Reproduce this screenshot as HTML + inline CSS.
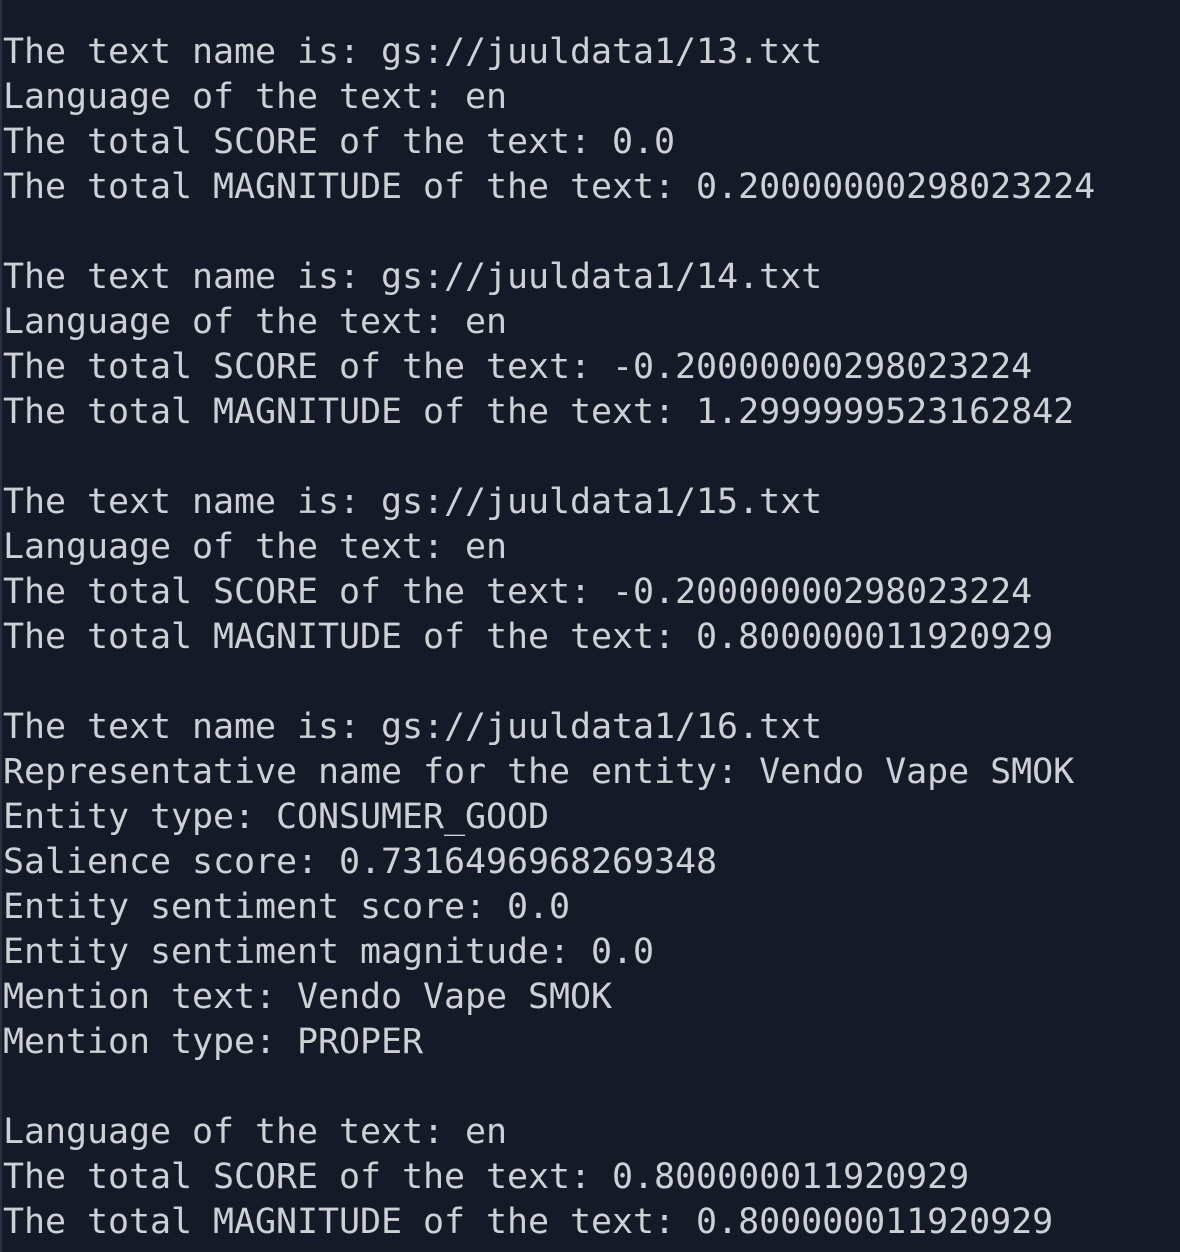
<!DOCTYPE html>
<html><head><style>
html,body{margin:0;padding:0;background:#141a28;width:1180px;height:1252px;overflow:hidden}
body{border-left:2px solid #2a3040;box-sizing:border-box}
pre{margin:0;position:absolute;left:3px;top:30px;font-family:"DejaVu Sans Mono","Liberation Mono",monospace;font-size:35px;line-height:45px;color:#cdd0d4;letter-spacing:-0.07px}
</style></head><body><pre>The text name is: gs://juuldata1/13.txt
Language of the text: en
The total SCORE of the text: 0.0
The total MAGNITUDE of the text: 0.20000000298023224

The text name is: gs://juuldata1/14.txt
Language of the text: en
The total SCORE of the text: -0.20000000298023224
The total MAGNITUDE of the text: 1.2999999523162842

The text name is: gs://juuldata1/15.txt
Language of the text: en
The total SCORE of the text: -0.20000000298023224
The total MAGNITUDE of the text: 0.800000011920929

The text name is: gs://juuldata1/16.txt
Representative name for the entity: Vendo Vape SMOK
Entity type: CONSUMER_GOOD
Salience score: 0.7316496968269348
Entity sentiment score: 0.0
Entity sentiment magnitude: 0.0
Mention text: Vendo Vape SMOK
Mention type: PROPER

Language of the text: en
The total SCORE of the text: 0.800000011920929
The total MAGNITUDE of the text: 0.800000011920929</pre></body></html>
